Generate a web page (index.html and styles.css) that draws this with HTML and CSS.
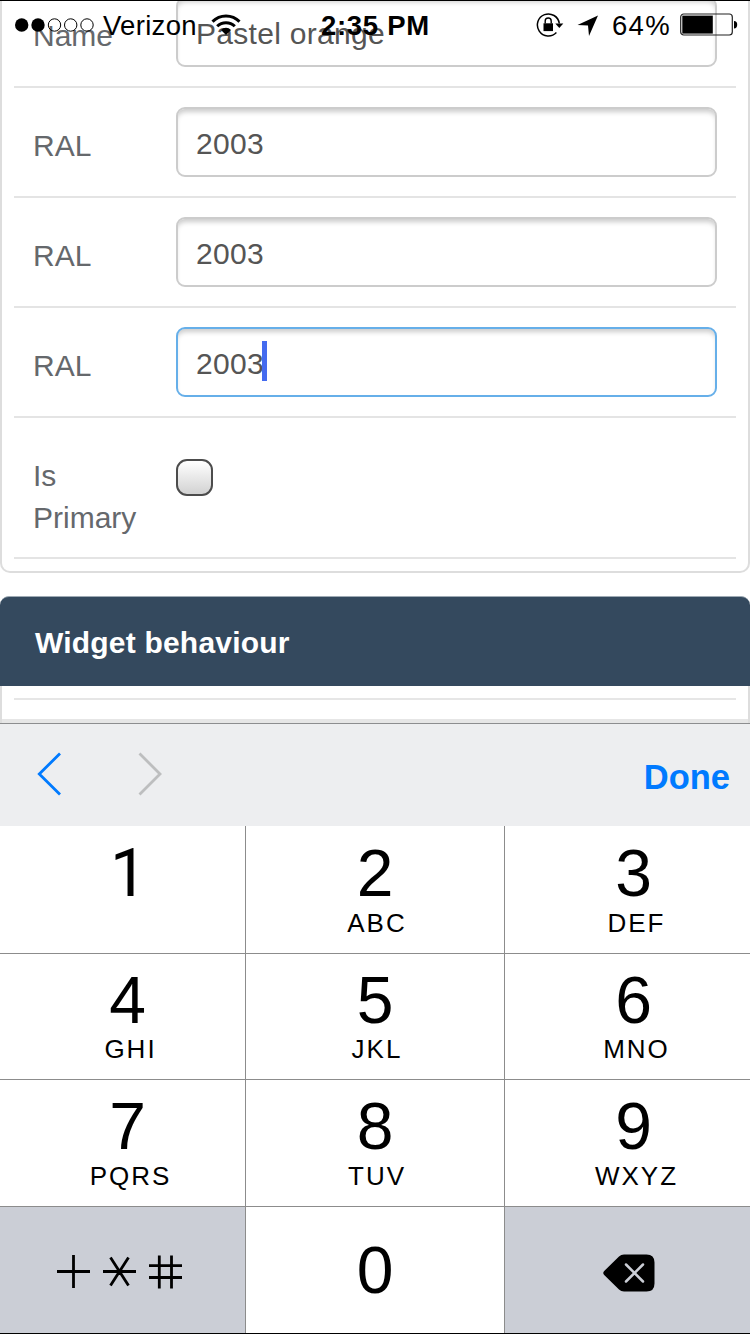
FILE: index.html
```html
<!DOCTYPE html>
<html lang="en">
<head>
<meta charset="utf-8">
<title>Widget settings</title>
<link rel="stylesheet" href="styles.css">
</head>
<body>
<div class="phone">
  <header class="status">
    <div class="status-left">
      <svg class="signal" width="80" height="16" viewBox="0 0 80 16">
        <circle cx="6.7" cy="8" r="6.7"/><circle cx="23" cy="8" r="6.7"/>
        <g fill="none" stroke="#000" stroke-width="1"><circle cx="39.5" cy="8" r="6.2"/><circle cx="55.7" cy="8" r="6.2"/><circle cx="72" cy="8" r="6.2"/></g>
      </svg>
      <span class="carrier">Verizon</span>
      <svg class="wifi" width="30" height="22" viewBox="0 0 30 22">
        <g fill="none" stroke="#000" stroke-width="3"><path d="M1.5 7.6a19 19 0 0 1 27 0"/><path d="M6.2 12.3a12.4 12.4 0 0 1 17.6 0"/></g>
        <path d="M15 21l-5-5.1a7.1 7.1 0 0 1 10 0z"/>
      </svg>
    </div>
    <span class="time">2:35 PM</span>
    <div class="status-right">
      <svg class="lock" width="28" height="26" viewBox="0 0 28 26">
        <path d="M20.4 20.5A11 11 0 1 1 23.3 11.5" fill="none" stroke="#000" stroke-width="1.5"/>
        <path d="M19.3 11.5h8l-4 4.5z"/>
        <path d="M7.5 11.3h9.5v7.8H7.5z"/>
        <path d="M9.2 11.5V9a3 3 0 0 1 6 0v2.500" fill="none" stroke="#000" stroke-width="1.4"/>
      </svg>
      <svg class="arrow" width="22" height="22" viewBox="0 0 22 22"><path d="M21 .5L12 21l-1-10.500L.5 10z"/></svg>
      <span class="percent">64%</span>
      <svg class="battery" width="58" height="24" viewBox="0 0 58 24">
        <rect x=".7" y="1" width="51.600" height="21" rx="3" fill="none" stroke="#222" stroke-width="1.2"/>
        <path d="M2.300 2.600h30.500v18H2.300z"/>
        <path d="M54 8q3.200 0 3.200 3.700T54 15.500z"/>
      </svg>
    </div>
  </header>

  <main class="page">
    <section class="card">
      <div class="row"><label class="label">Name</label><div class="field wide">Pastel orange</div></div>
      <div class="row"><label class="label">RAL</label><div class="field">2003</div></div>
      <div class="row"><label class="label">RAL</label><div class="field">2003</div></div>
      <div class="row"><label class="label">RAL</label><div class="field focused">2003<span class="caret"></span></div></div>
      <div class="row"><label class="label">Is<br>Primary</label><div class="checkbox"></div></div>
    </section>
    <section class="widget">
      <h2 class="heading">Widget behaviour</h2>
      <div class="widget-body"><div class="rule"></div><div class="rule last-rule"></div></div>
    </section>
  </main>

  <section class="keyboard">
    <div class="toolbar">
      <svg class="chevrons" width="128" height="44" viewBox="0 0 128 44" fill="none" stroke-width="2.800">
        <path d="M24 1.500L3.300 22l20.700 20.500" stroke="#007aff"/>
        <path d="M103.500 1.500L124 22l-20.500 20.500" stroke="#bdbebf"/>
      </svg>
      <span class="done">Done</span>
    </div>
    <div class="keys">
      <div class="key first left"><span class="digit one">1</span></div>
      <div class="key first middle"><span class="digit">2</span><span class="letters">ABC</span></div>
      <div class="key first right"><span class="digit">3</span><span class="letters">DEF</span></div>
      <div class="key second left"><span class="digit">4</span><span class="letters">GHI</span></div>
      <div class="key second middle"><span class="digit">5</span><span class="letters">JKL</span></div>
      <div class="key second right"><span class="digit">6</span><span class="letters">MNO</span></div>
      <div class="key left"><span class="digit">7</span><span class="letters">PQRS</span></div>
      <div class="key middle"><span class="digit">8</span><span class="letters">TUV</span></div>
      <div class="key right"><span class="digit">9</span><span class="letters">WXYZ</span></div>
      <div class="key last gray symbols-key">
        <svg width="126" height="36" viewBox="0 0 126 36" fill="none" stroke="#000" stroke-width="2.800">
          <path d="M0 17.500h33M16.500 1v33M46 17.500h33M53.500 3.500l18 28M71.500 3.500l-18 28M92 11.700h33M92 23.500h33M102.300 1.500v33M114.500 1.500v33"/>
        </svg>
      </div>
      <div class="key last middle"><span class="digit">0</span></div>
      <div class="key last gray delete-key">
        <svg width="52" height="38" viewBox="0 0 52 38">
          <path d="M1.200 17L16 2.500Q18 .5 21 .5H43.500Q51.500 .5 51.500 8.500V29.500Q51.500 37.500 43.500 37.500H21Q18 37.500 16 35.500L1.200 21Q-.7 19 1.200 17z"/>
          <path d="M23 10.500l17 17M40 10.500l-17 17" stroke="#cbced6" stroke-width="2.500" stroke-linecap="round"/>
        </svg>
      </div>
    </div>
  </section>
</div>
</body>
</html>
```
FILE: styles.css
```css
* { box-sizing: border-box; }
body { margin: 0; font-family: "Liberation Sans", Arial, sans-serif; background: #fff; }
svg { display: block; flex: none; }

.phone {
  position: relative;
  display: flex;
  flex-direction: column;
  width: 750px;
  height: 1334px;
  overflow: hidden;
  border-bottom: 1px solid #000;
}

/* Status bar floats over the scrolled form */
.status {
  position: absolute;
  top: 0;
  left: 0;
  z-index: 2;
  display: grid;
  grid-template-columns: 321px 1fr auto;
  width: 750px;
  height: 50px;
  padding: 0 12px 0 0;
  border-top: 1px solid #000;
  font-size: 27.500px;
  line-height: 50px;
  white-space: nowrap;
}
.status-left { display: flex; padding-left: 15px; }
.signal { margin-top: 16px; }
.carrier { width: 98px; padding-left: 8px; letter-spacing: .3px; }
.wifi { margin: 13px 0 0 18px; }
.time { font-weight: bold; letter-spacing: .7px; }
.status-right { display: flex; }
.lock { margin-top: 11px; }
.arrow { margin: 14px 13px 0 13px; }
.percent { width: 68px; letter-spacing: 1.300px; }
.battery { margin-top: 12px; }

.page { height: 723px; flex: none; overflow: hidden; color: #65686c; font-size: 30px; }
.card {
  margin-top: -22px;
  padding: 0 12px 12px;
  border: 2px solid #ddd;
  border-top: 0;
  border-radius: 0 0 10px 10px;
}
.row {
  display: flex;
  align-items: flex-start;
  padding: 19px 19px 18px;
  border-bottom: 2px solid #e4e4e4;
}
.row:not(:last-child) { height: 110px; }
.label { width: 143px; flex: none; padding-top: 18px; line-height: 42px; }
.field {
  display: flex;
  flex: 1;
  height: 70px;
  padding-left: 18px;
  border: 2px solid #ccc;
  border-radius: 9px;
  box-shadow: inset 0 5px 5px -2px #ccc;
  color: #555;
  line-height: 70px;
  letter-spacing: .3px;
}
.focused { border-color: #66afe9; }
.caret { width: 5px; height: 40px; margin: 12px 0 0 -2px; background: #446bef; }
.checkbox {
  width: 37px;
  height: 37px;
  margin-top: 22px;
  border: 2px solid #4c4c4c;
  border-radius: 11px;
  background: linear-gradient(#fff, #d2d2d2);
}

.widget { margin-top: 23px; }
.heading {
  height: 90px;
  margin: 0;
  padding-left: 35px;
  border-top: 1px solid #9eaab4;
  border-radius: 9px 9px 0 0;
  background: #34495e;
  color: #fff;
  font-size: 30px;
  line-height: 91px;
  letter-spacing: .2px;
}
.widget-body { height: 38px; padding: 12px 0 0; border: solid #ddd; border-width: 0 2px; }
.rule { height: 21px; margin: 0 12px; border-top: 2px solid #e6e6e6; }
.last-rule { margin: 0; border-top-width: 4px; }

.keyboard { flex: 1; }
.toolbar {
  display: flex;
  justify-content: space-between;
  height: 103px;
  padding: 28px 20px 0 36px;
  border-top: 1px solid #8c8d8f;
  background: #edeef0;
}
.done { color: #007aff; font-size: 34.500px; font-weight: bold; line-height: 50px; }
.keys {
  display: grid;
  grid-template-columns: 246px 259px 245px;
  grid-template-rows: 128px 126px 127px 126px;
}
.key {
  display: flex;
  flex-direction: column;
  align-items: center;
  padding-top: 16px;
  border-right: 1px solid #8c8c8c;
  border-bottom: 1px solid #8c8c8c;
}
.key:nth-child(3n) { border-right: 0; }
.first { padding-top: 17px; }
.left { padding-left: 10px; }
.right { padding-left: 12px; }
.last { padding-top: 33px; border-bottom: 0; }
.digit { color: #000; font-size: 66px; line-height: 60px; }
.one { padding: 1px 0 0 2px; font-family: Roboto, "Liberation Sans", sans-serif; }
.letters {
  margin-top: 5px;
  padding-left: 6px;
  font-size: 26px;
  line-height: 30px;
  letter-spacing: 2px;
}
.middle .letters { padding-left: 4px; }
.second .letters { margin-top: 4px; }
.gray { background: #cbced6; }
.symbols-key { align-items: flex-start; padding: 47px 0 0 57px; }
.delete-key { align-items: flex-start; padding: 47px 0 0 98px; }
```
